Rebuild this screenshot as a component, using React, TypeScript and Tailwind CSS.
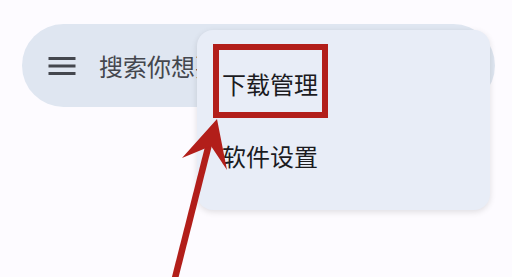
const searchHint = '搜索你想要的应用';

const menuItems = ['下载管理', '软件设置'];

function MenuIcon() {
  return (
    <svg viewBox="0 0 24 24" className="h-9 w-9 shrink-0 fill-[#44474e]">
      <path d="M3 18h18v-2H3v2zm0-5h18v-2H3v2zm0-7v2h18V6H3z" />
    </svg>
  );
}

export default function App() {
  return (
    <div className="relative h-[277px] w-[512px] overflow-hidden bg-[#fdfbff] font-['Noto_Sans_CJK_SC','Noto_Sans',sans-serif]">
      <div className="ml-[22px] mr-[17px] mt-[24px] flex h-[83px] items-center gap-[19px] rounded-full bg-[#dfe6f1] pl-[22px]">
        <MenuIcon />
        <span className="whitespace-nowrap text-[24px] leading-none text-[#44474e]">{searchHint}</span>
      </div>

      {/* popup menu */}
      <div className="absolute left-[197px] top-[30px] flex h-[180px] w-[293px] flex-col rounded-[16px] bg-[#e8edf7] py-[18px] shadow-[0_2px_6px_rgba(0,0,0,0.12)]">
        {menuItems.map((item) => (
          <div key={item} className="flex h-[72px] items-center pl-[25px] text-[24px] leading-none text-[#1b1b1f]">
            {item}
          </div>
        ))}
      </div>

      {/* annotation: box + arrow */}
      <div className="absolute left-[213px] top-[44px] h-[74px] w-[115px] border-[6px] border-[#b21e1a]" />
      <svg className="pointer-events-none absolute left-0 top-0" width="512" height="277" viewBox="0 0 512 277">
        <line x1="174" y1="282" x2="210" y2="140" stroke="#b21e1a" strokeWidth="6.5" />
        <polygon points="217,119 227,170 211,146 182,158" fill="#b21e1a" />
      </svg>
    </div>
  );
}
